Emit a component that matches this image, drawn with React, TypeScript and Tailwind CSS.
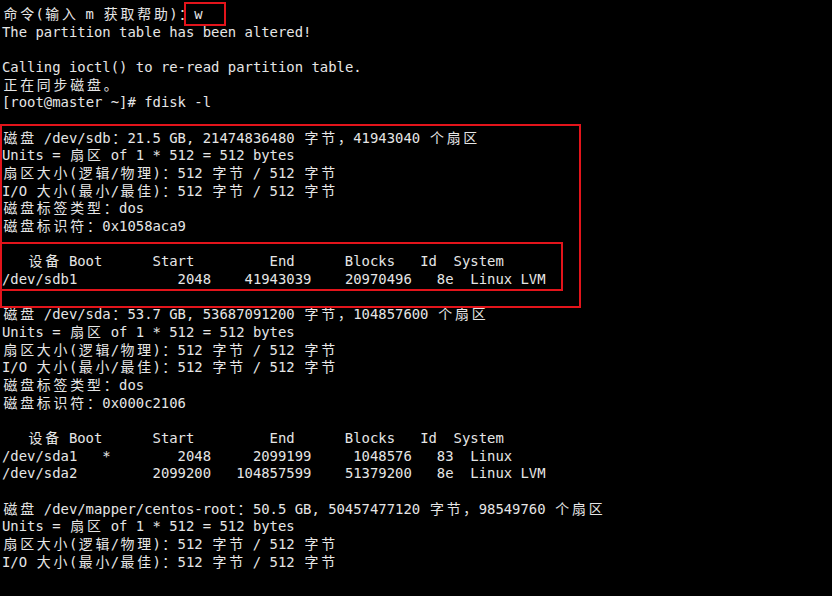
const lines = [
  "命令(输入 m 获取帮助)：w",
  "The partition table has been altered!",
  "",
  "Calling ioctl() to re-read partition table.",
  "正在同步磁盘。",
  "[root@master ~]# fdisk -l",
  "",
  "磁盘 /dev/sdb：21.5 GB, 21474836480 字节，41943040 个扇区",
  "Units = 扇区 of 1 * 512 = 512 bytes",
  "扇区大小(逻辑/物理)：512 字节 / 512 字节",
  "I/O 大小(最小/最佳)：512 字节 / 512 字节",
  "磁盘标签类型：dos",
  "磁盘标识符：0x1058aca9",
  "",
  "   设备 Boot      Start         End      Blocks   Id  System",
  "/dev/sdb1            2048    41943039    20970496   8e  Linux LVM",
  "",
  "磁盘 /dev/sda：53.7 GB, 53687091200 字节，104857600 个扇区",
  "Units = 扇区 of 1 * 512 = 512 bytes",
  "扇区大小(逻辑/物理)：512 字节 / 512 字节",
  "I/O 大小(最小/最佳)：512 字节 / 512 字节",
  "磁盘标签类型：dos",
  "磁盘标识符：0x000c2106",
  "",
  "   设备 Boot      Start         End      Blocks   Id  System",
  "/dev/sda1   *        2048     2099199     1048576   83  Linux",
  "/dev/sda2         2099200   104857599    51379200   8e  Linux LVM",
  "",
  "磁盘 /dev/mapper/centos-root：50.5 GB, 50457477120 字节，98549760 个扇区",
  "Units = 扇区 of 1 * 512 = 512 bytes",
  "扇区大小(逻辑/物理)：512 字节 / 512 字节",
  "I/O 大小(最小/最佳)：512 字节 / 512 字节",
];

const wide = /[\u3000-\u9fff\uff00-\uffef]/;

// terminal cells: CJK glyphs take two columns
function Line({ text }: { text: string }) {
  const parts: React.ReactNode[] = [];
  let buf = "";
  Array.from(text).forEach((ch, i) => {
    if (wide.test(ch)) {
      if (buf) parts.push(buf);
      buf = "";
      parts.push(
        <span key={i} className="inline-block w-[2ch] text-center">
          {ch}
        </span>
      );
    } else {
      buf += ch;
    }
  });
  if (buf) parts.push(buf);
  return <div className="h-[17.68px] leading-[17.68px] whitespace-pre">{parts}</div>;
}

export default function App() {
  return (
    <div className="relative w-[832px] h-[596px] overflow-hidden bg-black text-[#e6e6e6] text-[13.9px] font-['DejaVu_Sans_Mono','Noto_Sans_CJK_SC',monospace] pt-[6px] pl-[2px]">
      {lines.map((l, i) => (
        <Line key={i} text={l} />
      ))}

      {/* red highlight boxes */}
      <div className="absolute left-[184px] top-[2px] w-[42px] h-[24px] border-2 border-[#e3141b]" />
      <div className="absolute left-0 top-[124px] w-[581px] h-[184px] border-2 border-[#e3141b]" />
      <div className="absolute left-0 top-[242px] w-[563px] h-[49px] border-2 border-[#e3141b]" />
    </div>
  );
}
